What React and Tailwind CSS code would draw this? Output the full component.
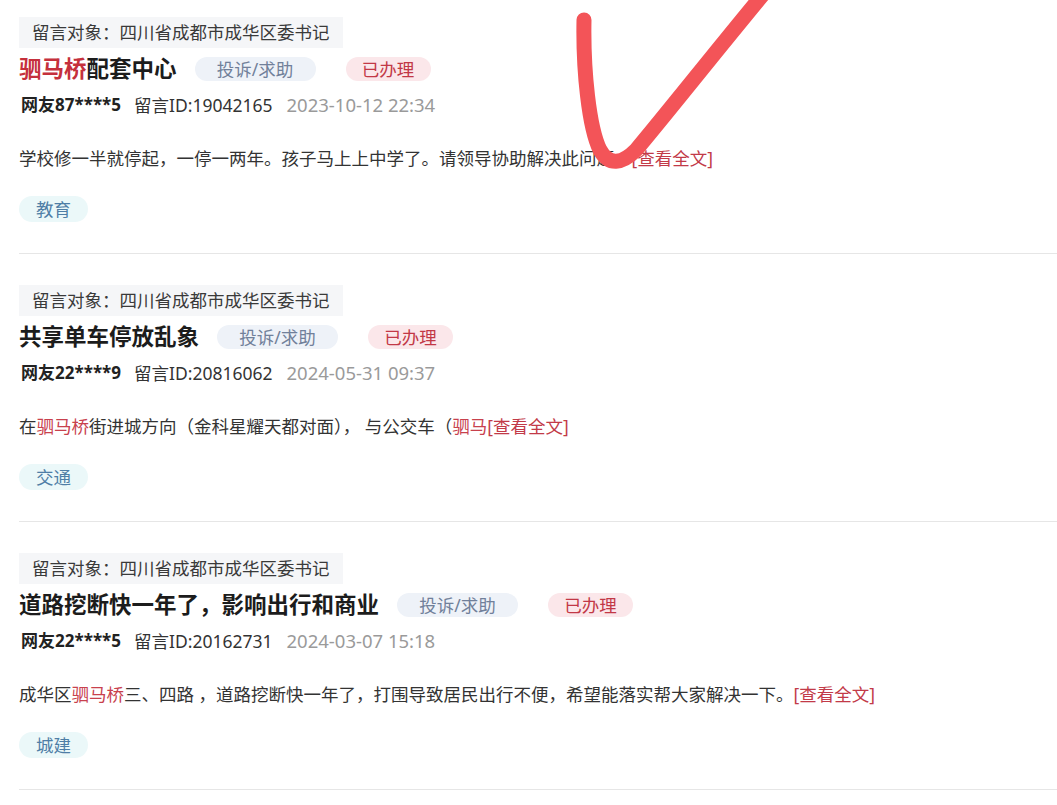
import React from "react";

function Hl({ children }) {
  return <span className="text-[#c8414d]">{children}</span>;
}

const items = [
  {
    title: (
      <>
        <span className="text-[#c5303c]">驷马桥</span>配套中心
      </>
    ),
    user: "网友87****5",
    id: "19042165",
    date: "2023-10-12 22:34",
    content: <>学校修一半就停起，一停一两年。孩子马上上中学了。请领导协助解决此问题。</>,
    tag: "教育",
  },
  {
    title: <>共享单车停放乱象</>,
    user: "网友22****9",
    id: "20816062",
    date: "2024-05-31 09:37",
    content: (
      <>
        在<Hl>驷马桥</Hl>街进城方向（金科星耀天都对面）， 与公交车（<Hl>驷马</Hl>
      </>
    ),
    tag: "交通",
  },
  {
    title: <>道路挖断快一年了，影响出行和商业</>,
    user: "网友22****5",
    id: "20162731",
    date: "2024-03-07 15:18",
    content: (
      <>
        成华区<Hl>驷马桥</Hl>三、四路 ，道路挖断快一年了，打围导致居民出行不便，希望能落实帮大家解决一下。
      </>
    ),
    tag: "城建",
  },
];

function Card({ item, first }) {
  return (
    <div className={first ? "pt-[17px]" : "pt-[31px]"}>
      <div className="pl-[19px]">
        <div className="inline-flex h-[31px] items-center bg-[#f5f6f8] px-[13px] text-[17.5px] leading-[31px] text-[#3a3a3a]">
          留言对象：四川省成都市成华区委书记
        </div>
        <div className="mt-[9px] flex h-[24px] items-center">
          <div className="text-[22.5px] font-bold leading-[24px] text-[#1c1c1c]">{item.title}</div>
          <div className="ml-[18px] flex h-[24px] w-[121px] items-center justify-center rounded-full bg-[#eef2f8] text-[17.5px] text-[#71809a]">
            投诉/求助
          </div>
          <div className="ml-[30px] flex h-[24px] w-[85px] items-center justify-center rounded-full bg-[#fbe7ea] text-[17.5px] text-[#c23846]">
            已办理
          </div>
        </div>
        <div className="mt-[12px] flex h-[24px] items-center leading-[24px]">
          <span className="ml-[2px] text-[17px] font-bold text-[#222]">{item.user}</span>
          <span className="ml-[13px] text-[17.5px] text-[#333]">留言ID:{item.id}</span>
          <span className="ml-[14px] text-[18.5px] text-[#9a9a9a]">{item.date}</span>
        </div>
        <div className="mt-[29px] h-[24px] whitespace-pre text-[17.5px] leading-[24px] text-[#333]">
          {item.content}
          <span className="text-[#c23a48]">[查看全文]</span>
        </div>
        <div className="mt-[26px] inline-flex h-[26px] items-center rounded-full bg-[#ebf8f9] px-[17px] text-[17.5px] text-[#4f7ea6]">
          {item.tag}
        </div>
      </div>
      <div className="ml-[19px] mt-[31px] h-px bg-[#e6e6e6]" />
    </div>
  );
}

export default function App() {
  return (
    <div
      className="relative h-[805px] w-[1057px] overflow-hidden bg-white"
      style={{ fontFamily: '"Noto Sans", "Noto Sans CJK SC", sans-serif' }}
    >
      {items.map((it, i) => (
        <Card key={i} item={it} first={i === 0} />
      ))}
      <svg
        className="pointer-events-none absolute left-0 top-0"
        width="1057"
        height="805"
        viewBox="0 0 1057 805"
      >
        <path
          d="M584 20 C583 70 589 128 600 150 C609 166 622 164 636 150 C668 112 720 46 770 -14"
          fill="none"
          stroke="#f35458"
          strokeWidth="15"
          strokeLinecap="round"
          strokeLinejoin="round"
        />
      </svg>
    </div>
  );
}
